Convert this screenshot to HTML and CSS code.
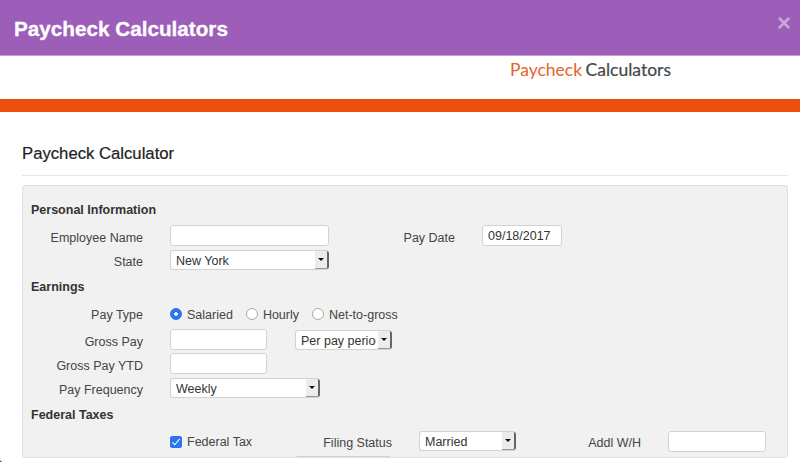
FILE: index.html
```html
<!DOCTYPE html>
<html lang="en">
<head>
  <meta charset="UTF-8" />
  <title>Paycheck Calculators</title>
  <link rel="stylesheet" href="styles.css">
</head>
<body>
  <div class="modal">
    <div class="modal-header">
      <h1>Paycheck Calculators</h1>
      <span class="close">&times;</span>
    </div>
    <div class="logo-row">
      <span class="logo"><span class="logo-accent">Paycheck</span> Calculators</span>
    </div>
    <div class="orange-bar"></div>

    <div class="content">
      <h2>Paycheck Calculator</h2>

      <form class="calc-panel">
        <!-- Personal Information -->
        <h3 class="first">Personal Information</h3>
        <div class="row">
          <label class="lbl">Employee Name</label>
          <input type="text" class="w-159">
          <label class="lbl w-pay-date">Pay Date</label>
          <input type="text" class="w-80" value="09/18/2017">
        </div>
        <div class="row row-tight">
          <label class="lbl">State</label>
          <span class="select-box w-159">
            <select><option>New York</option></select>
            <span class="select-btn"><span class="caret"></span></span>
          </span>
        </div>

        <!-- Earnings -->
        <h3>Earnings</h3>
        <div class="row row-radio">
          <label class="lbl">Pay Type</label>
          <div class="radio-group">
            <label class="check"><input type="radio" name="payType" checked>Salaried</label>
            <label class="check"><input type="radio" name="payType">Hourly</label>
            <label class="check"><input type="radio" name="payType">Net-to-gross</label>
          </div>
        </div>
        <div class="row row-gross">
          <label class="lbl">Gross Pay</label>
          <input type="text" class="w-97">
          <span class="select-box w-97 push-1">
            <select><option>Per pay period</option></select>
            <span class="select-btn"><span class="caret"></span></span>
          </span>
        </div>
        <div class="row row-tight">
          <label class="lbl">Gross Pay YTD</label>
          <input type="text" class="w-97">
        </div>
        <div class="row row-tight">
          <label class="lbl">Pay Frequency</label>
          <span class="select-box w-150">
            <select><option>Weekly</option></select>
            <span class="select-btn"><span class="caret"></span></span>
          </span>
        </div>

        <!-- Federal Taxes -->
        <h3>Federal Taxes</h3>
        <div class="row row-fed">
          <span class="lbl"></span>
          <label class="check w-100"><input type="checkbox" checked>Federal Tax</label>
          <label class="lbl w-95">Filing Status</label>
          <span class="select-box w-97 flush">
            <select><option>Married</option></select>
            <span class="select-btn"><span class="caret"></span></span>
          </span>
          <label class="lbl w-98">Addl W/H</label>
          <input type="text" class="w-98">
        </div>
        <div class="row row-cut">
          <span class="lbl"></span>
          <span class="w-98"></span>
          <input type="text" class="w-97">
        </div>
      </form>
    </div>
  </div>
</body>
</html>
```

FILE: styles.css
```css
html, body {
  height: 100%;
  margin: 0;
  overflow: hidden;
}

body {
  background: #333;
  font-family: "Liberation Sans", Arial, sans-serif;
  font-size: 12.5px;
  color: #333;
}

.modal {
  height: 462px;
  background: #fff;
  border-bottom-left-radius: 3px;
  overflow: hidden;
}

.modal-header {
  height: 55px;
  padding: 0 14px;
  display: flex;
  justify-content: space-between;
  background: #9d5eb9;
  border-bottom: 1px solid #c3a0d3;
}

.modal-header h1 {
  margin: 17px 0 0;
  font-size: 20.7px;
  line-height: 24px;
  font-weight: bold;
  color: #fff;
  -webkit-text-stroke: 0.3px #fff;
}

.close {
  margin: 12px -5px 0 0;
  font-size: 24px;
  line-height: 22px;
  font-weight: bold;
  color: #c7a8d6;
}

.logo-row {
  height: 43px;
  padding-left: 510px;
}

.logo {
  display: block;
  padding-top: 3px;
  font-family: Lato, sans-serif;
  font-size: 17.5px;
  line-height: 22px;
  word-spacing: -1px;
  color: #44474a;
  -webkit-text-stroke: 0.2px #44474a;
}

.logo-accent {
  color: #e8622c;
  -webkit-text-stroke: 0;
}

.orange-bar {
  height: 13px;
  background: #ec500f;
}

.content {
  padding: 0 12px 0 22px;
}

.content h2 {
  margin: 0;
  padding: 32px 0 11px;
  height: 20px;
  font-size: 16.7px;
  line-height: 20px;
  font-weight: normal;
  color: #222;
  border-bottom: 1px solid #e6e6e6;
  -webkit-text-stroke: 0.2px #222;
}

.calc-panel {
  box-sizing: border-box;
  height: 273px;
  margin-top: 9px;
  padding: 17px 0 0 8px;
  background: #f1f1f1;
  border: 1px solid #e0e0e0;
  border-radius: 3px;
  overflow: hidden;
}

.calc-panel h3 {
  margin: 10px 0 9px;
  font-size: 12.5px;
  line-height: 15px;
  font-weight: bold;
  color: #333;
}

.calc-panel h3.first {
  margin: 0 0 7px;
}

.row {
  display: flex;
  gap: 27px;
  height: 21px;
}

.row-tight {
  margin-top: 3px;
}

.row-radio {
  height: 20px;
  align-items: center;
}

.row-gross {
  margin-top: 5px;
}

.row-fed {
  margin-top: -1px;
}

.row-cut {
  margin-top: 4px;
}

.lbl {
  flex: none;
  width: 112px;
  padding-top: 5px;
  line-height: 17px;
  text-align: right;
  color: #444;
}

.row-radio .lbl {
  padding-top: 2px;
}

.row-fed .lbl {
  padding-top: 4px;
}

.row input[type="text"] {
  box-sizing: border-box;
  flex: none;
  height: 21px;
  margin: 0;
  padding: 0 5px;
  font: 12.5px "Liberation Sans", Arial, sans-serif;
  color: #333;
  background: #fff;
  border: 1px solid #d2d2d2;
  border-radius: 3px;
}

.w-80 { width: 80px !important; }
.w-95 { width: 95px; }
.w-97 { width: 97px !important; }
.w-98 { flex: none; width: 98px !important; }
.w-100 { flex: none; width: 100px; }
.w-150 { width: 150px; }
.w-159 { width: 159px !important; }
.w-pay-date { width: 99px; }

.push-1 {
  margin-left: 1px;
}

.select-box {
  position: relative;
  flex: none;
  display: block;
  box-sizing: border-box;
  height: 20px;
  margin-top: 1px;
  background: #fff;
  border: 1px solid #d2d2d2;
  border-right: 0;
  border-radius: 3px;
  overflow: hidden;
}

.select-box.flush {
  margin-top: 0;
}

.select-box select {
  -webkit-appearance: none;
  appearance: none;
  display: block;
  width: 100%;
  height: 20px;
  padding: 0 16px 0 5px;
  font: 12.5px "Liberation Sans", Arial, sans-serif;
  color: #333;
  background: transparent;
  border: 0;
  outline: 0;
}

.select-btn {
  position: absolute;
  top: -1px;
  right: 0;
  bottom: -1px;
  width: 12px;
  display: flex;
  align-items: center;
  justify-content: center;
  background: #ececec;
  border-right: 2px solid #666;
  border-bottom: 2px solid #999;
  border-radius: 0 3px 3px 0;
}

.caret {
  width: 0;
  height: 0;
  border-left: 3px solid transparent;
  border-right: 3px solid transparent;
  border-top: 3px solid #111;
}

.radio-group {
  display: flex;
  gap: 13px;
  padding-top: 2px;
}

.radio-group input {
  margin-top: -2px;
}

.check {
  display: flex;
  align-items: center;
  gap: 5px;
  color: #444;
  line-height: 17px;
}

.check input {
  -webkit-appearance: none;
  appearance: none;
  position: relative;
  flex: none;
  width: 12px;
  height: 12px;
  background: #fff;
  border: 1px solid #aaa;
  margin-left: 0;
  margin-right: 0;
}

.check input[type="radio"] {
  border-radius: 50%;
}

.check input[type="radio"]:checked {
  background: radial-gradient(circle, #fff 0 1.5px, #2a74ee 2px);
  border-color: #2a74ee;
}

.check input[type="checkbox"] {
  border-radius: 2px;
  margin-top: -1px;
  margin-bottom: 0;
}

.check input[type="checkbox"]:checked {
  background: #2a74ee;
  border-color: #2a74ee;
}

.check input[type="checkbox"]:checked::after {
  content: "";
  position: absolute;
  left: 3px;
  top: 0;
  width: 3px;
  height: 7px;
  border: solid #fff;
  border-width: 0 1.5px 1.5px 0;
  transform: rotate(40deg);
}

.row-fed .check {
  margin-top: 2px;
}
```
